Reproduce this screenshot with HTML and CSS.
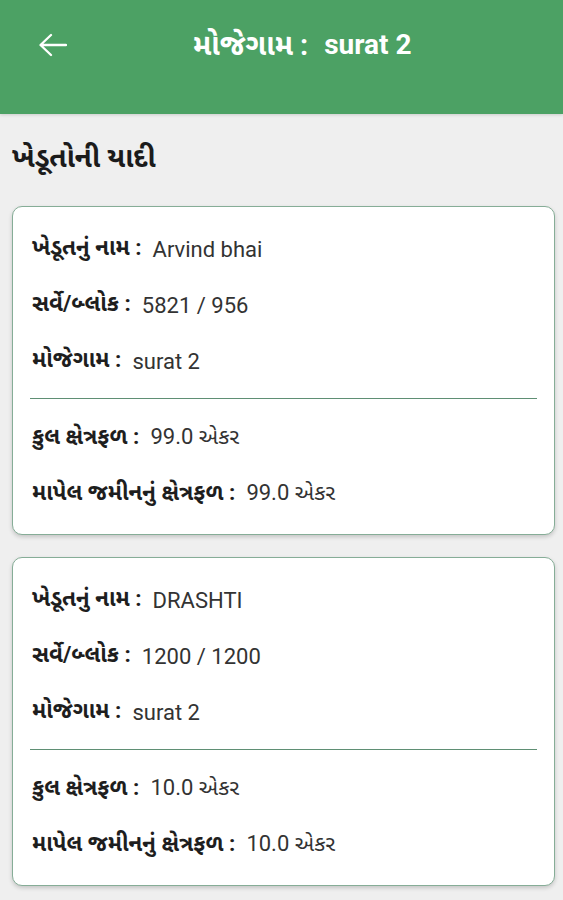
FILE: index.html
```html
<!DOCTYPE html>
<html lang="gu">
<head>
<meta charset="utf-8">
<title>ખેડૂતોની યાદી</title>
<link rel="stylesheet" href="styles.css">
</head>
<body>
<header class="appbar">
  <div class="toolbar">
    <span class="back" aria-label="back">
      <svg width="29" height="24" viewBox="0 0 29 24"><path d="M28 12H3M13 2L2.5 12L13 22" fill="none" stroke="#fff" stroke-width="2.3" stroke-linecap="round" stroke-linejoin="round"/></svg>
    </span>
    <h1 class="title"><span class="gu">મોજેગામ :</span>&nbsp; <span class="en">surat 2</span></h1>
  </div>
</header>
<main class="content">
  <h2 class="heading">ખેડૂતોની યાદી</h2>

  <section class="card">
    <div class="row"><span class="label">ખેડૂતનું નામ :</span><span class="value">Arvind bhai</span></div>
    <div class="row"><span class="label">સર્વે/બ્લોક :</span><span class="value">5821 / 956</span></div>
    <div class="row"><span class="label">મોજેગામ :</span><span class="value">surat 2</span></div>
    <hr class="divider">
    <div class="row"><span class="label">કુલ ક્ષેત્રફળ :</span><span class="value">99.0 એકર</span></div>
    <div class="row"><span class="label">માપેલ જમીનનું ક્ષેત્રફળ :</span><span class="value">99.0 એકર</span></div>
  </section>

  <section class="card">
    <div class="row"><span class="label">ખેડૂતનું નામ :</span><span class="value">DRASHTI</span></div>
    <div class="row"><span class="label">સર્વે/બ્લોક :</span><span class="value">1200 / 1200</span></div>
    <div class="row"><span class="label">મોજેગામ :</span><span class="value">surat 2</span></div>
    <hr class="divider">
    <div class="row"><span class="label">કુલ ક્ષેત્રફળ :</span><span class="value">10.0 એકર</span></div>
    <div class="row"><span class="label">માપેલ જમીનનું ક્ષેત્રફળ :</span><span class="value">10.0 એકર</span></div>
  </section>
</main>
</body>
</html>
```

FILE: styles.css
```css
* { box-sizing: border-box; }
html, body { margin: 0; padding: 0; }
body {
  background: #efefef;
  font-family: Roboto, "Noto Sans Gujarati", "Lohit Gujarati", "Noto Sans", sans-serif;
  color: #222;
  width: 563px;
  height: 900px;
  overflow: hidden;
}
.appbar {
  background: #4ca164;
  height: 114px;
  box-shadow: 0 1px 3px rgba(0,0,0,0.15);
}
.toolbar {
  display: flex;
  align-items: center;
  height: 90px;
  padding-left: 38px;
}
.back { display: flex; width: 29px; height: 24px; }
.title {
  margin: 0 0 0 126px;
  font-weight: 700;
  color: #fff;
  white-space: pre;
  line-height: 36px;
  display: flex;
  align-items: center;
}
.title .gu { font-size: 29px; }
.title .en { font-size: 28px; margin-left: 0; }
.content { padding: 24px 8px 0 12px; }
.heading {
  margin: 0 0 28px 0;
  font-size: 28px;
  font-weight: 700;
  color: #1b1b1b;
  line-height: 40px;
}
.card {
  background: #fff;
  border: 1px solid #86ad97;
  border-radius: 10px;
  padding: 14px 17px 12px 19px;
  margin-bottom: 22px;
  box-shadow: 0 2px 4px rgba(0,0,0,0.18);
}
.row {
  display: flex;
  align-items: center;
  height: 56px;
  font-size: 22px;
}
.label {
  font-weight: 700;
  font-size: 22.5px;
  color: #1e1e1e;
  margin-right: 11px;
}
.value { color: #333; }
.divider {
  border: 0;
  border-top: 1px solid #5f8f74;
  margin: 9px 0 11px -2px;
}
```
